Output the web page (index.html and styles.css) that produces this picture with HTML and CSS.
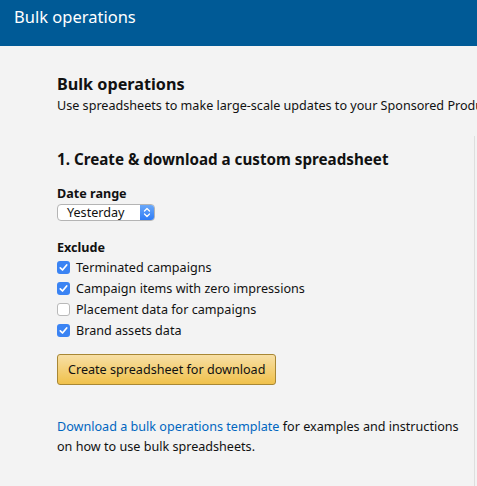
FILE: index.html
```html
<!DOCTYPE html>
<html>
<head>
  <meta charset="utf-8">
  <link rel="stylesheet" href="styles.css">
  <title>Bulk operations</title>
</head>
<body>
  <div class="topbar">Bulk operations</div>

  <div class="page">
    <h1>Bulk operations</h1>
    <p class="intro">Use spreadsheets to make large-scale updates to your Sponsored Products campaigns.</p>

    <div class="columns">
      <div class="step">
        <h2>1. Create &amp; download a custom spreadsheet</h2>

        <div class="field field-date">
          <div class="label">Date range</div>
          <div class="select">
            <span class="select-value">Yesterday</span>
            <span class="select-arrow">
              <svg width="8" height="11" viewBox="0 0 8 11">
                <path d="M1.5 4 L4 1.5 L6.5 4 M1.5 7 L4 9.5 L6.5 7" fill="none" stroke="#fff" stroke-width="1.3" stroke-linecap="round" stroke-linejoin="round"/>
              </svg>
            </span>
          </div>
        </div>

        <div class="field field-exclude">
          <div class="label">Exclude</div>
          <label class="check"><span class="box on"><svg width="13" height="13" viewBox="0 0 13 13"><path d="M3.3 6.8 L5.5 9 L9.7 4" fill="none" stroke="#fff" stroke-width="1.7" stroke-linecap="round" stroke-linejoin="round"/></svg></span>Terminated campaigns</label>
          <label class="check"><span class="box on"><svg width="13" height="13" viewBox="0 0 13 13"><path d="M3.3 6.8 L5.5 9 L9.7 4" fill="none" stroke="#fff" stroke-width="1.7" stroke-linecap="round" stroke-linejoin="round"/></svg></span>Campaign items with zero impressions</label>
          <label class="check"><span class="box"></span>Placement data for campaigns</label>
          <label class="check"><span class="box on"><svg width="13" height="13" viewBox="0 0 13 13"><path d="M3.3 6.8 L5.5 9 L9.7 4" fill="none" stroke="#fff" stroke-width="1.7" stroke-linecap="round" stroke-linejoin="round"/></svg></span>Brand assets data</label>
        </div>

        <button class="btn">Create spreadsheet for download</button>

        <p class="note"><a href="#">Download a bulk operations template</a> for examples and instructions on how to use bulk spreadsheets.</p>
      </div>

      <div class="step step-upload"></div>
    </div>
  </div>
</body>
</html>
```

FILE: styles.css
```css
html, body {
  margin: 0;
  padding: 0;
}

body {
  background-color: #f3f3f3;
  color: #111;
  font-family: "Noto Sans", Arial, sans-serif;
  font-size: 12.6px;
  overflow: hidden;
}

.topbar {
  background-color: #005a96;
  color: white;
  height: 46px;
  box-sizing: border-box;
  padding: 5px 14px 0;
  font-size: 16.5px;
  line-height: 24px;
}

.page {
  padding: 26px 0 0 57px;
}

h1 {
  margin: 0;
  font-size: 16.2px;
  line-height: 24px;
  font-weight: bold;
}

.intro {
  margin: 0;
  white-space: nowrap;
  line-height: 20px;
}

.columns {
  display: flex;
  margin-top: 20px;
}

.step {
  width: 417px;
  flex-shrink: 0;
  padding-top: 12px;
  padding-bottom: 20px;
}

.step-upload {
  border-left: 1px solid #dedede;
  height: 330px;
}

h2 {
  margin: 0 0 15px;
  font-size: 15.2px;
  line-height: 22px;
  font-weight: bold;
}

.field-date {
  margin-bottom: 18px;
}

.field-exclude {
  margin-bottom: 13px;
}

.label {
  font-weight: bold;
  line-height: 18px;
}

.select {
  display: flex;
  width: 98px;
  height: 17px;
  box-sizing: border-box;
  border: 1px solid #b4b4b4;
  border-radius: 4px;
  background: white;
  overflow: hidden;
  margin-top: 1px;
}

.select-value {
  flex: 1;
  padding-left: 9px;
  line-height: 15px;
}

.select-arrow {
  width: 14px;
  display: flex;
  align-items: center;
  justify-content: center;
  background: linear-gradient(#6aa8f9, #2f7cf6);
}

.check {
  display: flex;
  align-items: center;
  height: 21px;
}

.box {
  width: 13px;
  height: 13px;
  box-sizing: border-box;
  border: 1px solid #b9b9b9;
  border-radius: 3px;
  background: white;
  margin-right: 6px;
  display: flex;
}

.box.on {
  border: none;
  background: #3a83f3;
}

.btn {
  display: block;
  height: 31px;
  padding: 0 10px;
  font-family: inherit;
  font-size: 12.6px;
  color: #111;
  border: 1px solid #a88734;
  border-radius: 3px;
  background: linear-gradient(#f7dfa5, #f0c14b);
}

.note {
  margin: 32px 0 0;
  line-height: 20px;
}

.note a {
  color: #0066c0;
  text-decoration: none;
}
```
